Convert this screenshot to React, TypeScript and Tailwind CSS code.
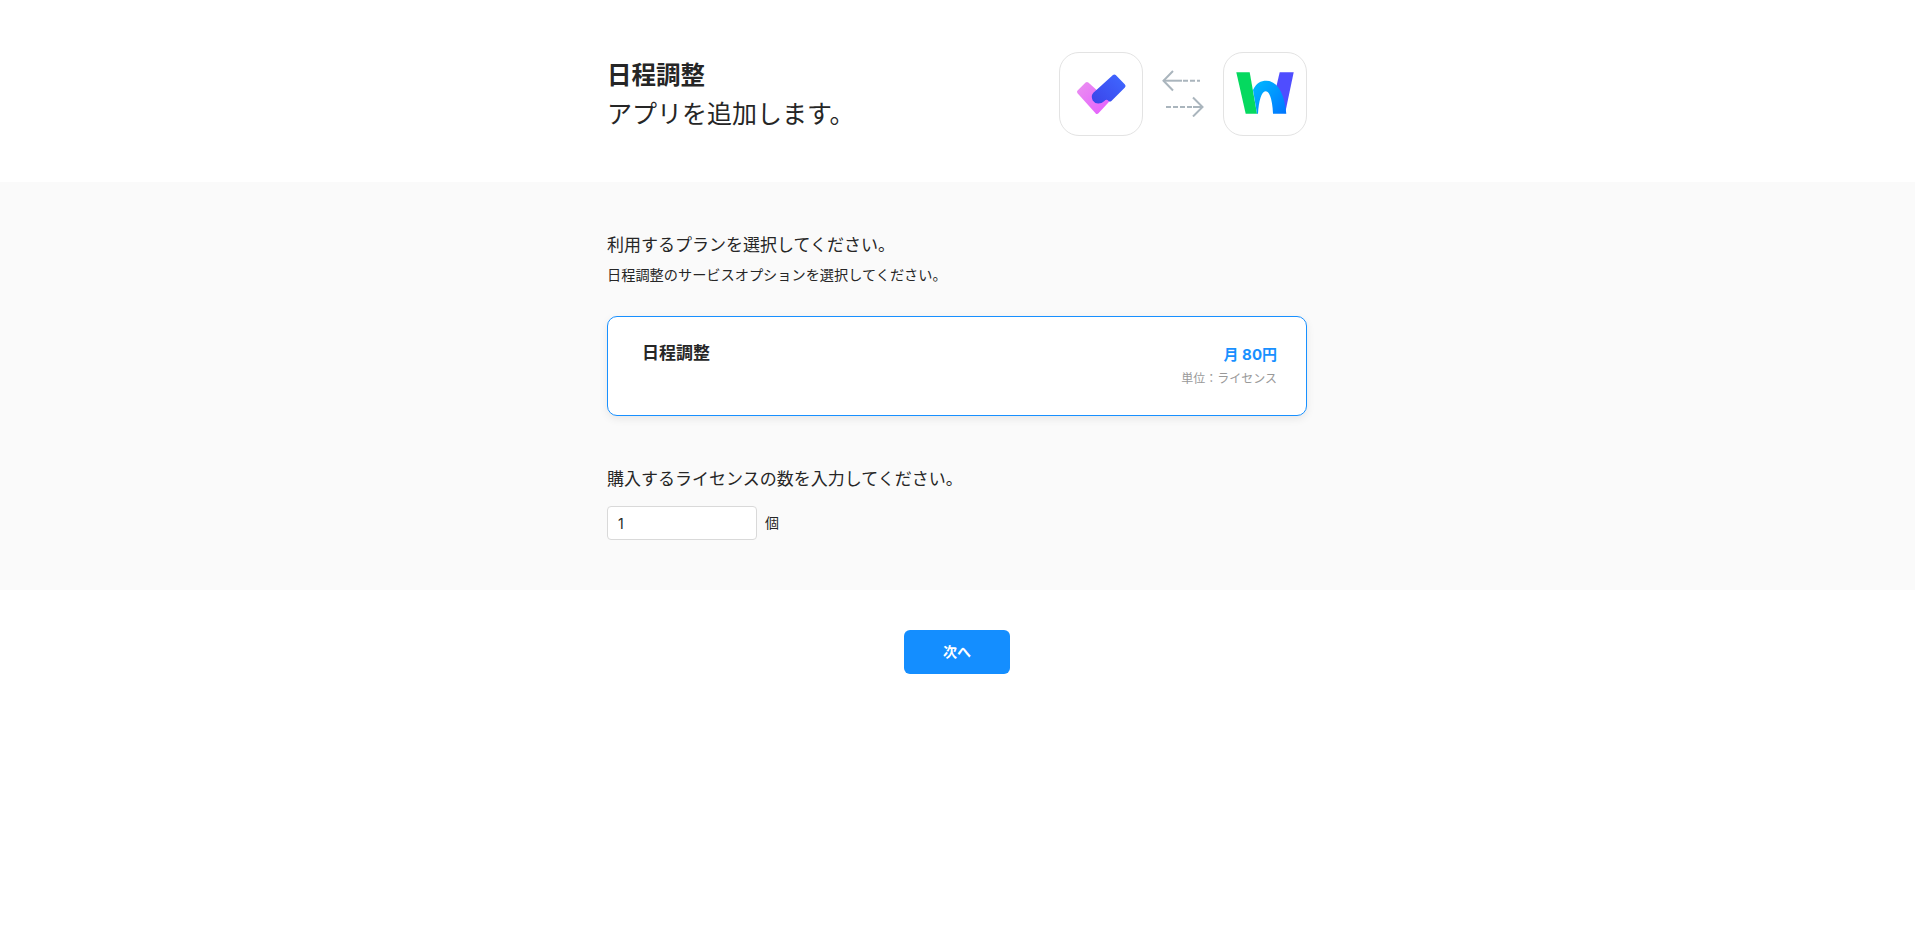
import React from 'react';

const TaskIcon = () => (
  <svg width="82" height="82" viewBox="0 0 82 82" fill="none">
    <defs>
      <linearGradient id="pink" x1="18" y1="30" x2="50" y2="62" gradientUnits="userSpaceOnUse">
        <stop offset="0" stopColor="#ea8ff0" />
        <stop offset="1" stopColor="#e55cff" />
      </linearGradient>
      <linearGradient id="blue" x1="62" y1="24" x2="36" y2="50" gradientUnits="userSpaceOnUse">
        <stop offset="0" stopColor="#3f66ff" />
        <stop offset="1" stopColor="#3b46ea" />
      </linearGradient>
    </defs>
    <path
      d="M19 39 27 31 42 44.500 49 46 37 59Z"
      fill="url(#pink)"
      stroke="url(#pink)"
      strokeWidth="4"
      strokeLinejoin="round"
    />
    <path
      d="M54.300 23.500 63.500 33 50 46.500C47.500 44 45 44.500 43 46.500 40 49.500 36 49 34.500 46.500 33.500 44.500 33.500 42.500 35 41Z"
      fill="url(#blue)"
      stroke="url(#blue)"
      strokeWidth="4"
      strokeLinejoin="round"
    />
  </svg>
);

const WorksLogo = () => (
  <svg width="82" height="82" viewBox="0 0 82 82" fill="none">
    <defs>
      <linearGradient id="arch" x1="30" y1="34" x2="60" y2="60" gradientUnits="userSpaceOnUse">
        <stop offset="0" stopColor="#00b4ff" />
        <stop offset="1" stopColor="#0078ff" />
      </linearGradient>
    </defs>
    <path d="M55.700 19.300H69.700L61 60.700 52 35Z" fill="#4f4dff" />
    <path d="M12.300 19.300H25.700L33 60.700H21.700Z" fill="#05d95f" />
    <path
      d="M29 37C32 30 37 27.700 42.300 27.700 53 27.700 60.500 40 62.300 60.700H49C48.500 48 46 38.300 41.500 38.300 37.500 38.300 34.800 48 34 60.700H33Z"
      fill="url(#arch)"
    />
  </svg>
);

const SyncArrows = () => (
  <svg className="mb-1" width="44" height="50" viewBox="0 0 44 50" fill="none" stroke="#aab5bd" strokeWidth="2">
    <path d="M12 4 2.500 13.700 12 23.500" />
    <path d="M2.500 13.700H21" />
    <path d="M22 13.700h17" strokeDasharray="5 2" />
    <path d="M5 40h27" strokeDasharray="5 2" />
    <path d="M32 40h9" />
    <path d="M32 30.500 41.500 40 32 49.500" />
  </svg>
);

export default function App() {
  return (
    <div className="min-h-screen bg-white font-['Inter','Noto_Sans_CJK_JP',sans-serif] text-[#262626]">
      {/* Header */}
      <div className="pr-px">
        <div className="mx-auto flex h-[182px] w-[700px] items-center justify-between pt-[5px]">
          <div>
            <div className="text-[24.5px] leading-[40px] font-bold">日程調整</div>
            <div className="text-[25px] leading-[38px]">アプリを追加します。</div>
          </div>
          <div className="flex items-center gap-[18px]">
            <div className="flex h-[84px] w-[84px] items-center justify-center rounded-[20px] border border-[#e3e3e3]">
              <TaskIcon />
            </div>
            <SyncArrows />
            <div className="flex h-[84px] w-[84px] items-center justify-center rounded-[20px] border border-[#e3e3e3]">
              <WorksLogo />
            </div>
          </div>
        </div>
      </div>

      {/* Plan section */}
      <div className="bg-[#fafafa] pt-[50px] pr-px pb-[50px]">
        <div className="mx-auto w-[700px]">
          <p className="text-[17px] leading-[26px]">利用するプランを選択してください。</p>
          <p className="mt-[6px] text-[14.2px] leading-[22px]">日程調整のサービスオプションを選択してください。</p>

          <div className="mt-[30px] flex h-[100px] justify-between rounded-[10px] border border-[#1890ff] bg-white pt-[23px] pr-[29px] pl-[34px] shadow-[0_3px_8px_rgba(0,0,0,0.08)]">
            <div className="text-[17px] leading-[26px] font-bold">日程調整</div>
            <div className="text-right">
              <div className="pt-[3px] text-[15px] leading-[24px] font-bold text-[#1890ff]">月 80円</div>
              <div className="mt-[3px] text-xs leading-[18px] text-[#999999]">単位：ライセンス</div>
            </div>
          </div>

          <p className="mt-[50px] text-[17px] leading-[26px]">購入するライセンスの数を入力してください。</p>
          <div className="mt-[14px] flex items-center gap-2">
            <input
              defaultValue="1"
              className="h-[34px] w-[150px] rounded border border-[#d9d9d9] bg-white px-[10px] text-sm outline-none"
            />
            <span className="text-sm">個</span>
          </div>
        </div>
      </div>

      {/* Footer action */}
      <div className="flex justify-center pt-10 pr-px">
        <button className="h-11 w-[106px] rounded-md bg-[#148eff] text-sm font-bold text-white">次へ</button>
      </div>
    </div>
  );
}
